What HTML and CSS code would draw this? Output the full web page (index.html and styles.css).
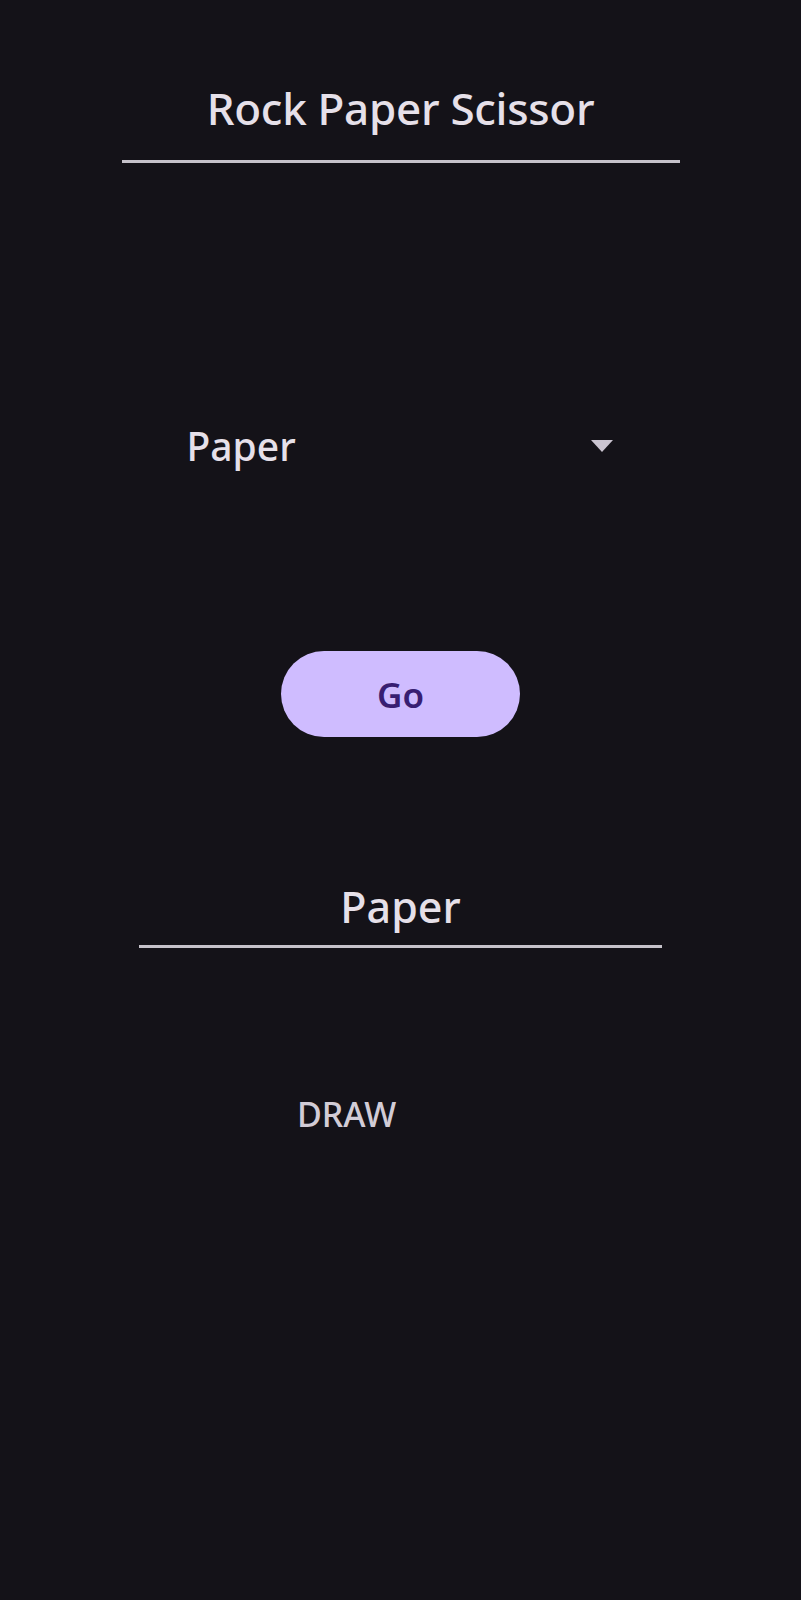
FILE: index.html
```html
<!DOCTYPE html>
<html>
<head>
<meta charset="utf-8">
<link rel="stylesheet" href="styles.css">
</head>
<body>
<div class="app">
  <h1 class="title">Rock Paper Scissor</h1>
  <div class="dropdown">
    <span class="dropdown-value">Paper</span>
    <span class="dropdown-arrow"></span>
  </div>
  <button class="go">Go</button>
  <div class="result">Paper</div>
  <div class="outcome">DRAW</div>
</div>
</body>
</html>
```
FILE: styles.css
```css
html, body {
  margin: 0;
  padding: 0;
  background: #141218;
}
body {
  width: 801px;
  min-height: 1600px;
  font-family: "Noto Sans", "Open Sans", sans-serif;
  color: #e6e0e9;
}
.app {
  display: flex;
  flex-direction: column;
  align-items: center;
  padding-top: 80px;
}
.title {
  width: 558px;
  margin: 0;
  font-size: 44px;
  font-weight: 500;
  line-height: 56px;
  text-align: center;
  padding-bottom: 24px;
  border-bottom: 3px solid #c6c2ca;
  letter-spacing: -0.3px;
}
.dropdown {
  margin-top: 255px;
  width: 424px;
  display: flex;
  align-items: center;
  justify-content: space-between;
  height: 56px;
}
.dropdown-value {
  font-size: 39px;
  font-weight: 500;
  line-height: 56px;
  letter-spacing: 0;
  margin-left: -2px;
}
.dropdown-arrow {
  width: 0;
  height: 0;
  border-left: 11.5px solid transparent;
  border-right: 11.5px solid transparent;
  border-top: 12px solid #cac4d0;
  margin-top: -1px;
}
.go {
  margin-top: 177px;
  width: 239px;
  height: 86px;
  border: none;
  border-radius: 43px;
  background: #cfbcff;
  color: #381e72;
  font-family: "Noto Sans", "Open Sans", sans-serif;
  font-size: 35px;
  font-weight: 600;
  padding: 0;
}
.result {
  margin-top: 140px;
  width: 523px;
  font-size: 43px;
  font-weight: 500;
  line-height: 60px;
  text-align: center;
  padding-bottom: 8px;
  border-bottom: 3px solid #c6c2ca;
  letter-spacing: 0;
}
.outcome {
  align-self: flex-start;
  margin-left: 297px;
  margin-top: 144px;
  font-size: 34px;
  font-weight: 500;
  line-height: 44px;
  color: #d2ccd6;
  letter-spacing: 0;
}
```
